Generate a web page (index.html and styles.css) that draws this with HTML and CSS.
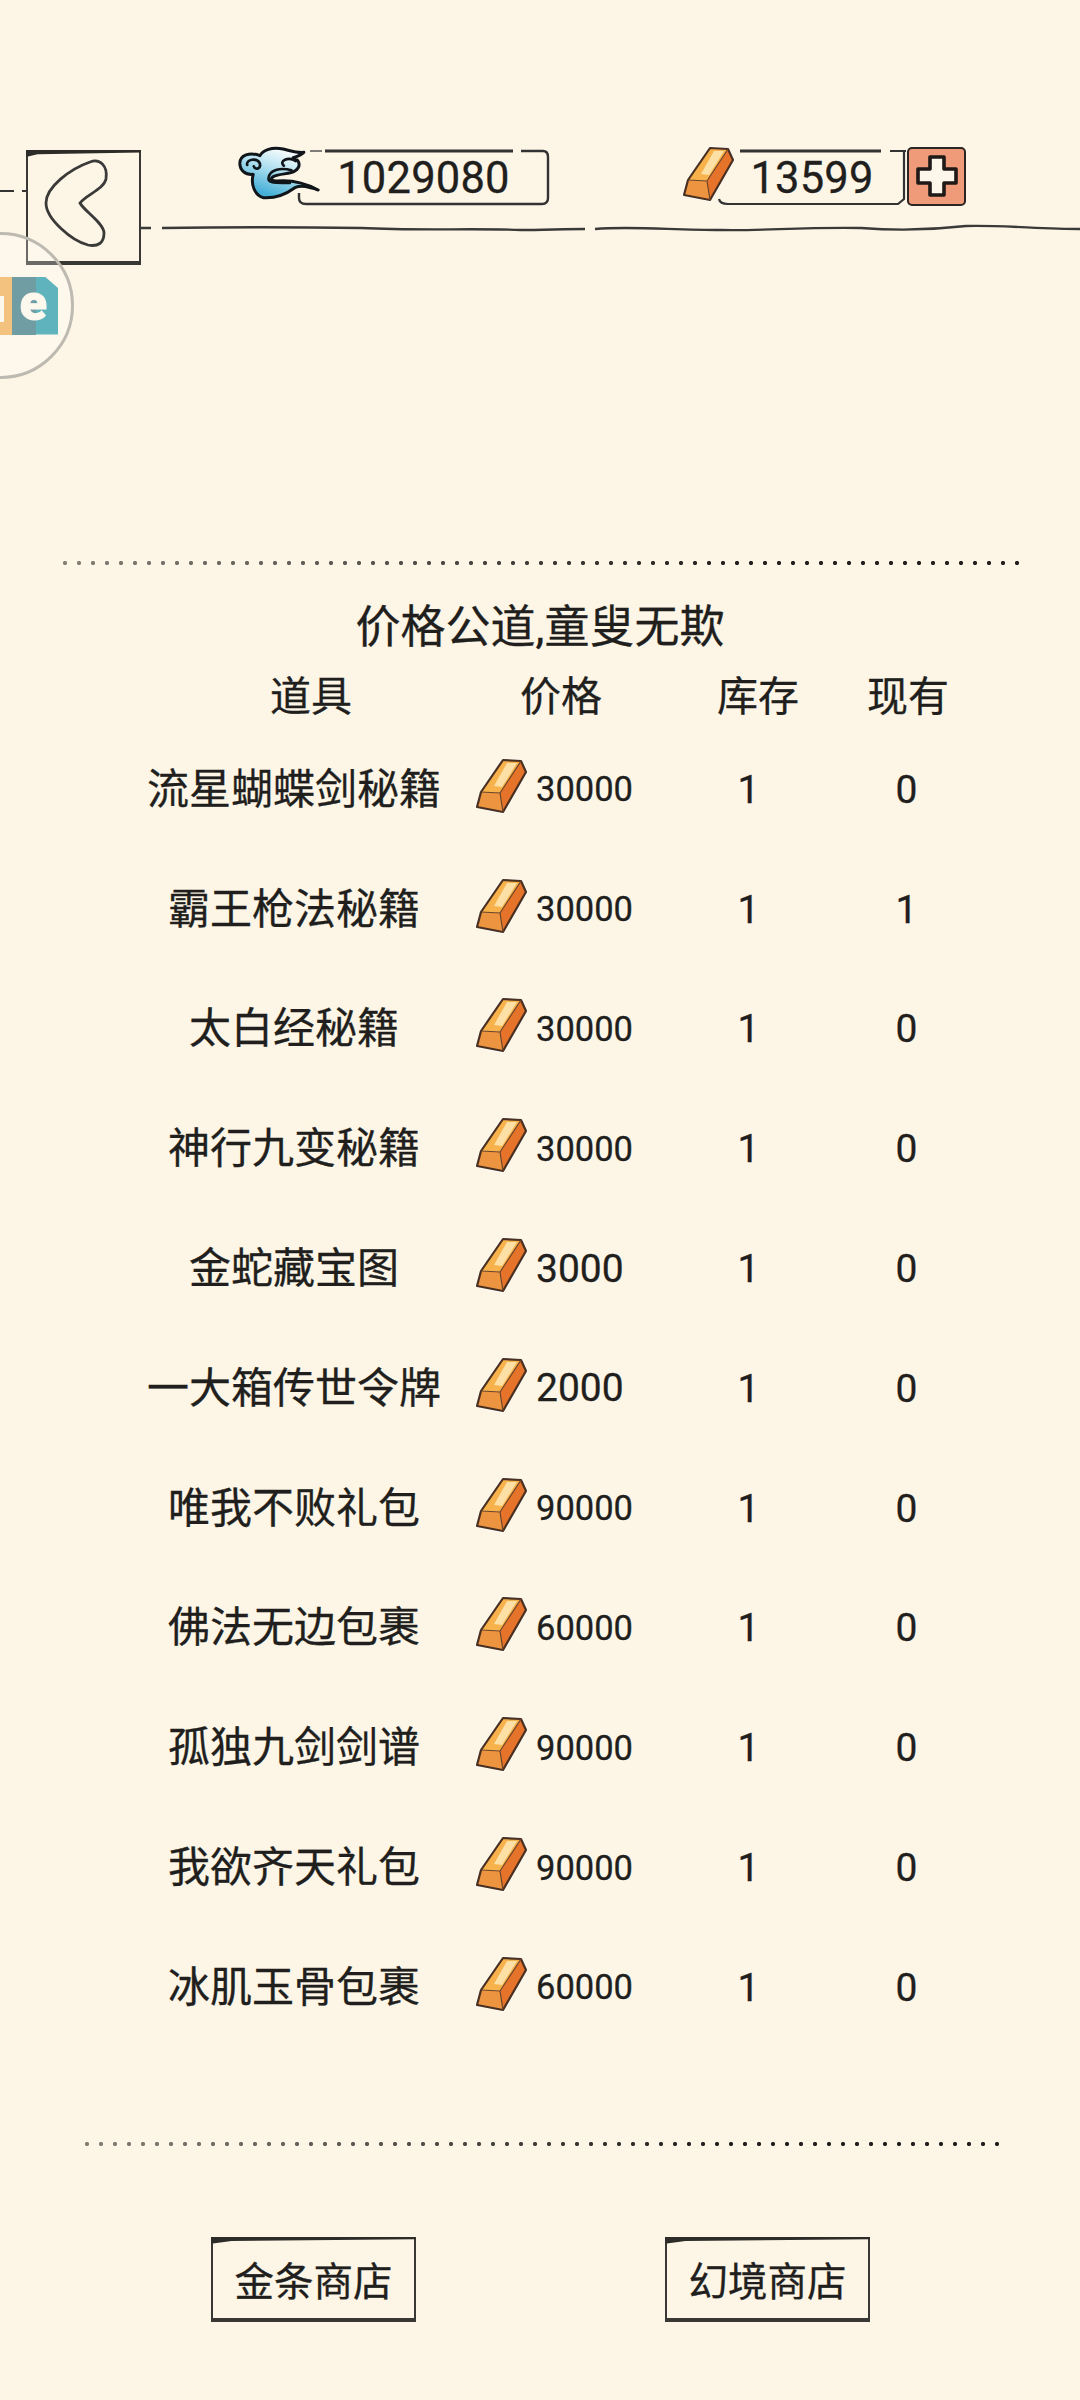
FILE: index.html
```html
<!DOCTYPE html>
<html>
 <head>
  <meta charset="utf-8">
  <title>商店</title>
  <link rel="stylesheet" href="styles.css">
 </head>
 <body>

 <svg class="defs" width="0" height="0">
  <defs>
   <linearGradient id="cloudfill" x1="0.75" y1="0.1" x2="0.3" y2="0.9">
    <stop offset="0" stop-color="#ffffff"/>
    <stop offset="0.45" stop-color="#b4e2f0"/>
    <stop offset="1" stop-color="#45afd8"/>
   </linearGradient>
   <symbol id="gold" viewBox="0 0 56 56">
    <!-- pale halo around the ingot -->
    <path d="M29 2L47 3L52 14L29 54L3 49L7 34Z" fill="#fbfaf4" stroke="#fbfaf4" stroke-width="4" stroke-linejoin="round"/>
    <path d="M29 2L47 3L26 35L7 34Z" fill="#f7b24c"/>
    <path d="M33 5L43 5L28 29L20 28Z" fill="#fde0a6"/>
    <path d="M47 3L52 14L29 54L26 35Z" fill="#e5742a"/>
    <path d="M7 34L26 35L29 54L3 49Z" fill="#ec9440"/>
    <path d="M29 2L47 3L52 14L29 54L3 49L7 34Z" fill="none" stroke="#4a3020" stroke-width="2.2" stroke-linejoin="round"/>
    <path d="M7 34L26 35L47 3M26 35L29 54" fill="none" stroke="#6b4326" stroke-width="1.2"/>
   </symbol>
  </defs>
 </svg>

 <!-- floating assistant bubble -->
 <div class="bubble">
  <div class="bubble-icon">
   <span class="tile tile-orange"></span>
   <span class="tile tile-gray"></span>
   <span class="tile tile-teal"></span>
   <span class="bubble-bit"></span>
   <span class="bubble-letter">e</span>
  </div>
 </div>

 <header class="topbar">
  <svg class="stub" width="26" height="10" viewBox="0 0 26 10">
   <path d="M0 5L14 5M22 5L26 5" stroke="#333" stroke-width="2" fill="none"/>
  </svg>
  <div class="sketch back">
   <svg width="70" height="92" viewBox="0 0 70 92">
    <path d="M46 5C56 1 64 9 62 22C60 32 42 38 36 46C40 54 60 66 60 76C60 86 54 90 44 88C28 84 2 62 2 46C2 30 26 12 46 5Z" fill="none" stroke="#3a3a38" stroke-width="2.8"/>
   </svg>
  </div>
  <div class="hud">
   <div class="stats">
    <svg class="cloud" width="82" height="55" viewBox="25 40 245 165">
     <path d="M30 95C30 70 60 60 90 72C100 55 125 45 160 52C185 58 205 65 222 62C212 72 200 75 190 78C210 85 215 105 195 118C180 128 150 125 130 135C120 142 125 148 140 148C170 145 210 145 265 175C235 165 215 160 195 168C165 190 130 200 100 198C75 190 62 160 70 128C45 130 30 115 30 95Z" fill="url(#cloudfill)" stroke="#10151a" stroke-width="9" stroke-linejoin="round"/>
     <path d="M52 100C48 82 82 78 90 95C94 112 76 116 72 104M198 88C175 74 146 88 162 102M185 116C150 106 118 116 116 140C114 158 150 152 180 154" fill="none" stroke="#10151a" stroke-width="8" stroke-linecap="round"/>
    </svg>
    <div class="field field-cloud">
     <svg class="frame" width="251" height="56" viewBox="0 0 251 56">
      <path d="M12 2L24 2" stroke="#555" stroke-width="1.5" fill="none"/>
      <path d="M27 2L215 2" stroke="#333" stroke-width="3" fill="none"/>
      <path d="M223 2L245 2Q250 2 250 8L250 49Q250 55 244 55L8 55Q1 55 1 49L1 44" stroke="#333" stroke-width="2.4" fill="none"/>
     </svg>
     <span>1029080</span>
    </div>
    <svg class="gold gold-hud" width="56" height="56"><use href="#gold"/></svg>
    <div class="field field-gold">
     <svg class="frame" width="186" height="56" viewBox="0 0 186 56">
      <path d="M22 2L163 2" stroke="#333" stroke-width="3" fill="none"/>
      <path d="M172 2L188 2M186 2L186 50L180 55L10 55Q2 55 1 50" stroke="#333" stroke-width="2.2" fill="none"/>
     </svg>
     <span>13599</span>
    </div>
    <div class="plus">
     <svg width="44" height="44" viewBox="0 0 44 44">
      <path d="M15 3L29 3L29 15L41 15L41 29L29 29L29 41L15 41L15 29L3 29L3 15L15 15Z" fill="#fdf6ea" stroke="#1f1a17" stroke-width="3.6" stroke-linejoin="round"/>
     </svg>
    </div>
   </div>
   <svg class="rule" width="939" height="12" viewBox="0 0 939 12">
    <path d="M0 5L10 5M21 5C90 4 150 4 220 5C280 8 330 5 380 7C400 7 425 6 444 6M454 6C490 3 530 7 580 7C620 8 660 4 720 5C760 8 790 7 825 3C860 2 900 6 939 6" fill="none" stroke="#3a3a38" stroke-width="2.4"/>
   </svg>
  </div>
 </header>

 <div class="dots dots-top"></div>

 <h1 class="motto">价格公道,童叟无欺</h1>

 <div class="grid heads">
  <div class="name">道具</div>
  <div class="price-head">价格</div>
  <div class="stock-head">库存</div>
  <div class="num">现有</div>
 </div>

 <div class="list">
  <div class="grid row">
   <div class="name">流星蝴蝶剑秘籍</div>
   <div class="price"><svg class="gold" width="56" height="56"><use href="#gold"/></svg>30000</div>
   <div class="num">1</div><div class="num">0</div>
  </div>
  <div class="grid row">
   <div class="name">霸王枪法秘籍</div>
   <div class="price"><svg class="gold" width="56" height="56"><use href="#gold"/></svg>30000</div>
   <div class="num">1</div><div class="num">1</div>
  </div>
  <div class="grid row">
   <div class="name">太白经秘籍</div>
   <div class="price"><svg class="gold" width="56" height="56"><use href="#gold"/></svg>30000</div>
   <div class="num">1</div><div class="num">0</div>
  </div>
  <div class="grid row">
   <div class="name">神行九变秘籍</div>
   <div class="price"><svg class="gold" width="56" height="56"><use href="#gold"/></svg>30000</div>
   <div class="num">1</div><div class="num">0</div>
  </div>
  <div class="grid row">
   <div class="name">金蛇藏宝图</div>
   <div class="price price-short"><svg class="gold" width="56" height="56"><use href="#gold"/></svg>3000</div>
   <div class="num">1</div><div class="num">0</div>
  </div>
  <div class="grid row">
   <div class="name">一大箱传世令牌</div>
   <div class="price price-short"><svg class="gold" width="56" height="56"><use href="#gold"/></svg>2000</div>
   <div class="num">1</div><div class="num">0</div>
  </div>
  <div class="grid row">
   <div class="name">唯我不败礼包</div>
   <div class="price"><svg class="gold" width="56" height="56"><use href="#gold"/></svg>90000</div>
   <div class="num">1</div><div class="num">0</div>
  </div>
  <div class="grid row">
   <div class="name">佛法无边包裹</div>
   <div class="price"><svg class="gold" width="56" height="56"><use href="#gold"/></svg>60000</div>
   <div class="num">1</div><div class="num">0</div>
  </div>
  <div class="grid row">
   <div class="name">孤独九剑剑谱</div>
   <div class="price"><svg class="gold" width="56" height="56"><use href="#gold"/></svg>90000</div>
   <div class="num">1</div><div class="num">0</div>
  </div>
  <div class="grid row">
   <div class="name">我欲齐天礼包</div>
   <div class="price"><svg class="gold" width="56" height="56"><use href="#gold"/></svg>90000</div>
   <div class="num">1</div><div class="num">0</div>
  </div>
  <div class="grid row">
   <div class="name">冰肌玉骨包裹</div>
   <div class="price"><svg class="gold" width="56" height="56"><use href="#gold"/></svg>60000</div>
   <div class="num">1</div><div class="num">0</div>
  </div>
 </div>

 <div class="dots dots-bottom"></div>

 <div class="shops">
  <div class="sketch shop">金条商店</div>
  <div class="sketch shop">幻境商店</div>
 </div>

 </body>
</html>
```

FILE: styles.css
```css
body {
  margin: 0;
  background: #fdf5e6;
  color: #211f1d;
  font-family: Roboto, "Noto Sans CJK SC", sans-serif;
  -webkit-text-stroke: 0.3px #211f1d;
  position: relative;
  overflow: hidden;
  height: 2400px;
}
.defs {
  position: absolute;
}

/* top bar */
.topbar {
  display: flex;
  align-items: flex-start;
  padding-top: 145px;
}
.stub {
  margin-top: 41px;
  flex: none;
}
.sketch {
  position: relative;
  box-sizing: border-box;
  display: flex;
  align-items: center;
  justify-content: center;
  background: #fdf5e6;
  border: 2px solid #3a3834;
  border-bottom-width: 4px;
}
/* tapered thick stroke along the top edge */
.sketch::before {
  content: "";
  position: absolute;
  left: -2px;
  right: -2px;
  top: -2px;
  height: 7px;
  background: #2e2c28;
  clip-path: polygon(0 0, 100% 0, 100% 35%, 10% 60%, 0 100%);
}
.back {
  flex: none;
  width: 115px;
  height: 115px;
  margin-top: 5px;
}
.back svg {
  margin: -7px 9px 0 0;
}
.hud {
  flex: none;
  width: 939px;
}
.stats {
  display: flex;
  align-items: center;
  height: 60px;
  padding-left: 97px;
}
.cloud {
  flex: none;
  margin-right: -22px;
  margin-top: -6px;
  position: relative;
  z-index: 1;
}
.field {
  position: relative;
  flex: none;
  box-sizing: border-box;
  height: 56px;
  margin-top: 3px;
  padding-top: 3px;
  display: flex;
  align-items: center;
  justify-content: center;
  font-size: 43.5px;
  letter-spacing: 0.2px;
}
.field-cloud {
  width: 251px;
}
.field-gold {
  width: 186px;
  padding-left: 2px;
}
.frame {
  position: absolute;
  left: 0;
  top: 0;
  overflow: visible;
}
.gold {
  flex: none;
  display: block;
}
.gold-hud {
  margin-left: 132px;
  margin-right: -19px;
  margin-top: -2px;
  position: relative;
  z-index: 1;
}
.plus {
  flex: none;
  box-sizing: border-box;
  width: 59px;
  height: 59px;
  margin: 2px 0 0 3px;
  background: #ef9a78;
  border: 2px solid #2b2523;
  border-radius: 5px;
  display: flex;
  align-items: center;
  justify-content: center;
}
.rule {
  display: block;
  margin-top: 18px;
}

/* floating bubble, half off the screen */
.bubble {
  position: absolute;
  left: -73px;
  top: 232px;
  box-sizing: border-box;
  width: 147px;
  height: 147px;
  border-radius: 50%;
  border: 3px solid #bdbab1;
  background: rgba(255, 255, 255, 0.25);
  z-index: 2;
  display: flex;
  align-items: center;
  justify-content: flex-end;
  padding-right: 13px;
}
.bubble-icon {
  position: relative;
  display: flex;
  height: 58px;
}
.tile {
  display: block;
  height: 58px;
}
.tile-orange {
  width: 30px;
  background: #f2c27e;
}
.tile-gray {
  width: 24px;
  background: #6f9da3;
}
.tile-teal {
  width: 22px;
  background: #5eb3bd;
  clip-path: polygon(0 0, 40% 0, 100% 20%, 100% 100%, 0 100%);
}
.bubble-bit {
  position: absolute;
  left: 0;
  width: 22px;
  top: 19px;
  height: 26px;
  background: #fdf8ee;
}
.bubble-letter {
  position: absolute;
  right: 11px;
  top: 6px;
  font-size: 50px;
  line-height: 40px;
  font-weight: 900;
  color: #fdf8ee;
  -webkit-text-stroke: 1px #fdf8ee;
}

/* dotted separators */
.dots {
  height: 6px;
  background-image: radial-gradient(circle at center, #23211f 1.8px, transparent 2.4px);
  background-size: 14px 6px;
  background-repeat: repeat-x;
  -webkit-mask-image: linear-gradient(to right, rgba(0, 0, 0, 0.55), #000 70%);
  mask-image: linear-gradient(to right, rgba(0, 0, 0, 0.55), #000 70%);
}
.dots-top {
  width: 966px;
  margin: 295px 0 0 58px;
}
.dots-bottom {
  width: 924px;
  margin: 95px 0 0 80px;
}

.motto {
  margin: 32px 0 0;
  font-size: 45px;
  line-height: 60px;
  font-weight: 400;
  text-align: center;
}

/* shop table */
.grid {
  display: grid;
  grid-template-columns: 340px 212px 144px 172px;
  margin-left: 124px;
  width: 868px;
  align-items: center;
}
.heads {
  margin-top: 5px;
  height: 50px;
  font-size: 41px;
}
.heads .name {
  padding-left: 34px;
}
.list {
  margin-top: 15px;
}
.row {
  height: 119.8px;
  font-size: 42px;
}
.name {
  text-align: center;
}
.row .name {
  padding-bottom: 5px;
}
.price-head {
  padding-left: 56px;
}
.stock-head {
  padding-left: 41px;
}
.num {
  text-align: center;
}
.row .num {
  font-size: 39px;
  padding: 4px 0 0 1px;
}
.heads .num {
  padding-left: 4px;
}
.price {
  display: flex;
  align-items: center;
  padding: 3px 0 0 10px;
  font-size: 34.5px;
}
.price-short {
  font-size: 39px;
}
.price .gold {
  margin-right: 6px;
  margin-top: -7px;
}

/* bottom buttons */
.shops {
  display: flex;
  gap: 249px;
  margin-top: 90px;
  padding-left: 211px;
}
.shop {
  width: 205px;
  height: 85px;
  font-size: 39.5px;
}
```
